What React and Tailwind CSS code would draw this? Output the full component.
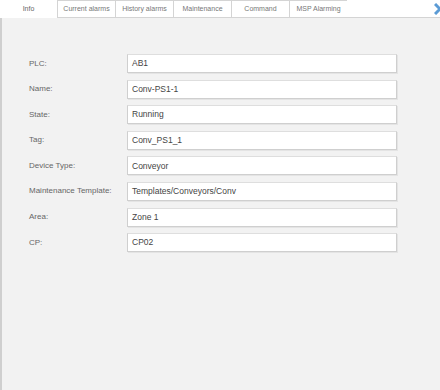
import React from 'react';

const tabs = ['Current alarms', 'History alarms', 'Maintenance', 'Command', 'MSP Alarming'];

const fields = [
  ['PLC:', 'AB1'],
  ['Name:', 'Conv-PS1-1'],
  ['State:', 'Running'],
  ['Tag:', 'Conv_PS1_1'],
  ['Device Type:', 'Conveyor'],
  ['Maintenance Template:', 'Templates/Conveyors/Conv'],
  ['Area:', 'Zone 1'],
  ['CP:', 'CP02'],
];

export default function App() {
  return (
    <div className="w-[440px] h-[390px] bg-white flex flex-col overflow-hidden" style={{ fontFamily: '"Liberation Sans", Arial, sans-serif' }}>
      {/* Tab bar */}
      <div className="flex h-[18px] shrink-0 relative">
        <div className="w-[57px] flex items-center justify-center text-[7px] text-[#666] bg-white">Info</div>
        {tabs.map((t) => (
          <div
            key={t}
            className="w-[58px] flex items-center justify-center text-[7px] text-[#777] bg-white border border-[#d4d4d4] border-r-0 last:border-r"
          >
            {t}
          </div>
        ))}
        <div className="flex-1 border-b border-[#d4d4d4]" />
        <svg className="absolute right-[-3px] top-[3px]" width="9" height="12" viewBox="0 0 9 12">
          <path d="M1 1 L6 6 L1 11" fill="none" stroke="#5b9bd5" strokeWidth="3" />
        </svg>
      </div>

      {/* Content */}
      <div className="flex-1 bg-[#f2f2f2] border-l-2 border-[#cfcfcf] pt-[36px] pl-[27px]">
        <div className="flex flex-col gap-[6.6px]">
          {fields.map(([label, value]) => (
            <div key={label} className="flex items-center">
              <div className="w-[98px] text-[8px] text-[#666]">{label}</div>
              <div className="w-[270px] h-[19px] bg-white border border-[#cfcfcf] border-t-[#dedede] flex items-center px-[4px] text-[8.5px] text-[#444] shadow-[1px_1px_0_#e4e4e4]">
                {value}
              </div>
            </div>
          ))}
        </div>
      </div>
    </div>
  );
}
